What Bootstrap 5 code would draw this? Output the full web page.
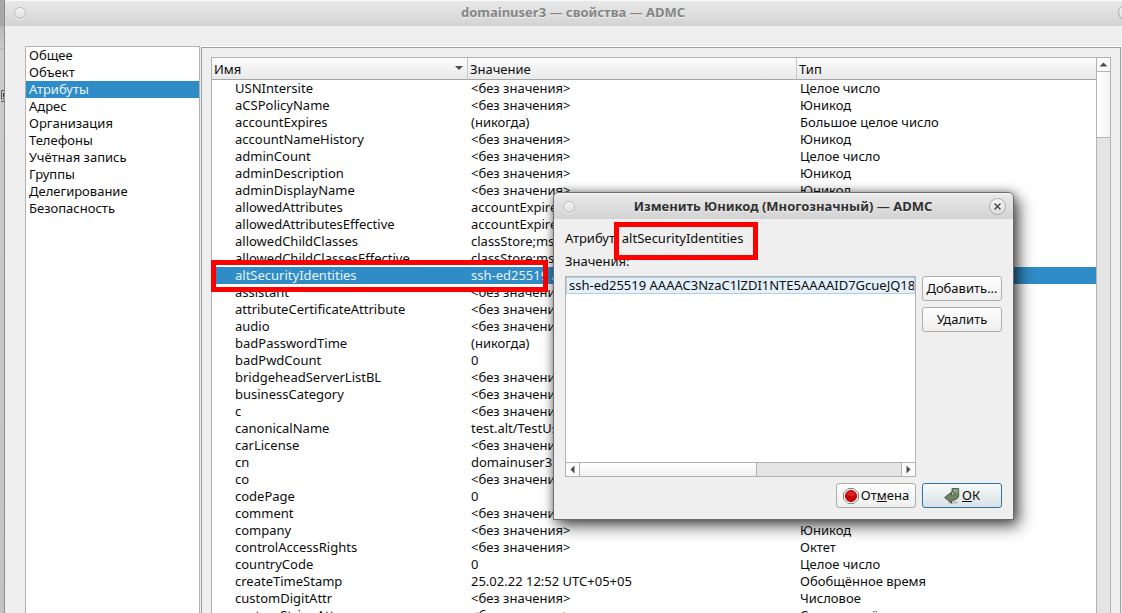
<!DOCTYPE html>
<html lang="ru">
<head>
<meta charset="utf-8">
<meta name="viewport" content="width=device-width, initial-scale=1">
<title>domainuser3 — свойства — ADMC</title>
<link href="https://cdn.jsdelivr.net/npm/bootstrap@5.3.0/dist/css/bootstrap.min.css" rel="stylesheet">
<style>
  :root { --line: #b2b2b2; --sel: #308cc6; --face: #efefef; }
  body { font: 13px/17px "Noto Sans", sans-serif; color: #0c0c0c; background: #cfcfcf; }
  .backdrop-edge { width: 5px; background: linear-gradient(#a8a8a8 0 26px, #b9b9b9 27px, #cacaca 48px, #b0b0b0 49px, #cbcbcb 50px, #c4c4c4 100%); border-right: 1px solid #8c8c8c; }
  .backdrop-edge svg { margin-top: 89px; }
  .main-window { margin-right: -21px; background: var(--face); border-top-left-radius: 6px; min-width: 0; }
  .title-bar { height: 26px; padding: 0 8px 2px 7px; background: linear-gradient(#e9e9e9, #d3d3d3); border-top: 1px solid #f8f8f8; font-weight: 700; color: #858585; text-shadow: 0 1px 0 #f2f2f2; }
  .editor .title-bar { padding: 0 7px; }
  .round-btn { width: 17px; height: 17px; padding: 0; border: 1px solid #a9a9a9; border-radius: 50%; background: linear-gradient(#f6f6f6, #dedede); line-height: 0; }
  .round-dot { width: 12px; height: 12px; margin: 0 2px; border-color: #bcbcbc; box-shadow: 0 1px 0 #f4f4f4; }
  .main-body { padding: 20px 22px 0 20px; min-height: 0; gap: 1px; }
  .pages { width: 175px; border: 1px solid var(--line); border-bottom: 0; background: #fff; }
  .pages .nav-link { padding: 0 3px; color: #0c0c0c; }
  .pages .nav-link.active { background: var(--sel); color: #e8f3fa; }
  .page-frame { min-width: 0; margin-top: 1px; border: 1px solid #9f9f9f; border-bottom: 0; box-shadow: 0 -1px 0 #fff; padding: 9px 9px 0 9px; }
  .tree-box { border: 1px solid var(--line); border-bottom: 0; background: #fff; min-height: 0; }
  .tree-view { min-width: 0; overflow: hidden; }
  .attrs { width: 100%; table-layout: fixed; border-collapse: separate; border-spacing: 0; white-space: nowrap; }
  .attrs th { height: 22px; padding: 2px 2px 0; font-weight: 400; background: linear-gradient(#fcfcfc, #e9e9e9); border-bottom: 1px solid #a5a5a5; border-right: 1px solid #c6c6c6; }
  .attrs th:last-child { border-right: 0; }
  .attrs td { height: 17px; padding: 0 3px; overflow: hidden; }
  .attrs td:first-child { padding-left: 23px; }
  .attrs .picked td { background: var(--sel); color: #e8f3fa; }
  .mark-box { position: absolute; border: 5px solid #f00; pointer-events: none; }
  .mark-row { left: -1px; top: 202px; width: 337px; height: 32px; }
  .mark-name { left: 49px; top: -8px; width: 144px; height: 38px; }
  .bar-v { width: 14px; background: #e4e4e4; border-left: 1px solid var(--line); }
  .bar-h { height: 14px; background: #e4e4e4; border-top: 1px solid var(--line); }
  .arrow-btn { width: 13px; height: 13px; padding: 0; border: 0; background: #fbfbfb; line-height: 0; display: grid; place-items: center; }
  .thumb-v { height: 67px; background: linear-gradient(90deg, #fff, #f3f3f3); border: solid var(--line); border-width: 1px 0; }
  .thumb-h { width: 178px; background: linear-gradient(#fff, #f0f0f0); border: solid var(--line); border-width: 0 1px; }
  .arrow-end { width: 14px; border-left: 1px solid var(--line); }
  .editor { position: absolute; left: 553px; top: 192px; width: 461px; background: var(--face); border: 1px solid #6b6b6b; border-radius: 6px 6px 0 0; box-shadow: 5px 6px 16px rgba(0,0,0,.65), 0 0 10px rgba(0,0,0,.35); }
  .editor .title-bar { color: #303030; border-radius: 5px 5px 0 0; }
  .editor-body { padding: 11px; gap: 6px; }
  .gap-tight { gap: 6px; }
  .values { min-width: 0; height: 201px; border: 1px solid var(--line); background: #fff; }
  .value-item { height: 17px; margin: 0; padding: 0 2px; background: #e4f1fa; border: 1px solid #b4cfdf; white-space: nowrap; overflow: hidden; line-height: 15px; }
  .tool-btn { width: 80px; height: 25px; padding: 0; font-size: 13px; line-height: 17px; color: #0c0c0c; border: 1px solid #adadad; border-radius: 3px; background: linear-gradient(#fefefe, #efefef); }
  .icon-btn { display: flex; align-items: center; justify-content: center; gap: 2px; }
  .ok-btn { border-color: #2a76a5; background: linear-gradient(#f8fafb, #dae1e6); }
</style>
</head>
<body class="vh-100 overflow-hidden position-relative">
<div class="d-flex h-100">
  <div class="backdrop-edge flex-shrink-0" aria-hidden="true">
    <svg class="d-block" width="4" height="14" viewBox="0 0 4 14"><path d="M4 1.500H1.500v8.500H4M1 12.500h3" fill="none" stroke="#555"/><path d="M3 4h1v4H3z" fill="#333"/></svg>
  </div>
  <main class="main-window flex-grow-1 d-flex flex-column">
    <header class="title-bar d-flex align-items-center justify-content-between flex-shrink-0">
      <button class="round-btn round-dot" type="button" aria-label="Меню окна"></button>
      <span>domainuser3 — свойства — ADMC</span>
      <button class="round-btn" type="button" aria-label="Закрыть"></button>
    </header>
    <div class="main-body d-flex flex-grow-1">
      <nav class="pages nav flex-column flex-nowrap flex-shrink-0">
        <a class="nav-link" href="#">Общее</a>
        <a class="nav-link" href="#">Объект</a>
        <a class="nav-link active" href="#">Атрибуты</a>
        <a class="nav-link" href="#">Адрес</a>
        <a class="nav-link" href="#">Организация</a>
        <a class="nav-link" href="#">Телефоны</a>
        <a class="nav-link" href="#">Учётная запись</a>
        <a class="nav-link" href="#">Группы</a>
        <a class="nav-link" href="#">Делегирование</a>
        <a class="nav-link" href="#">Безопасность</a>
      </nav>
      <section class="page-frame flex-grow-1 d-flex flex-column">
        <div class="tree-box d-flex flex-grow-1 position-relative">
          <div class="tree-view flex-grow-1">
            <table class="attrs">
              <colgroup><col style="width:256px"><col style="width:329px"><col></colgroup>
              <thead><tr>
                <th scope="col"><span class="d-flex justify-content-between align-items-center">Имя <svg width="12" height="10" viewBox="0 0 12 10"><path d="M2 1h8L6 5z" fill="#4c4c4c"/></svg></span></th>
                <th scope="col">Значение</th><th scope="col">Тип</th>
              </tr></thead>
              <tbody>
                <tr><td>USNIntersite</td><td>&lt;без значения&gt;</td><td>Целое число</td></tr>
                <tr><td>aCSPolicyName</td><td>&lt;без значения&gt;</td><td>Юникод</td></tr>
                <tr><td>accountExpires</td><td>(никогда)</td><td>Большое целое число</td></tr>
                <tr><td>accountNameHistory</td><td>&lt;без значения&gt;</td><td>Юникод</td></tr>
                <tr><td>adminCount</td><td>&lt;без значения&gt;</td><td>Целое число</td></tr>
                <tr><td>adminDescription</td><td>&lt;без значения&gt;</td><td>Юникод</td></tr>
                <tr><td>adminDisplayName</td><td>&lt;без значения&gt;</td><td>Юникод</td></tr>
                <tr><td>allowedAttributes</td><td>accountExpires</td><td></td></tr>
                <tr><td>allowedAttributesEffective</td><td>accountExpires</td><td></td></tr>
                <tr><td>allowedChildClasses</td><td>classStore;ms-</td><td></td></tr>
                <tr><td>allowedChildClassesEffective</td><td>classStore;ms-</td><td></td></tr>
                <tr class="picked"><td>altSecurityIdentities</td><td>ssh-ed25519 A</td><td></td></tr>
                <tr><td>assistant</td><td>&lt;без значения&gt;</td><td></td></tr>
                <tr><td>attributeCertificateAttribute</td><td>&lt;без значения&gt;</td><td></td></tr>
                <tr><td>audio</td><td>&lt;без значения&gt;</td><td></td></tr>
                <tr><td>badPasswordTime</td><td>(никогда)</td><td></td></tr>
                <tr><td>badPwdCount</td><td>0</td><td></td></tr>
                <tr><td>bridgeheadServerListBL</td><td>&lt;без значения&gt;</td><td></td></tr>
                <tr><td>businessCategory</td><td>&lt;без значения&gt;</td><td></td></tr>
                <tr><td>c</td><td>&lt;без значения&gt;</td><td></td></tr>
                <tr><td>canonicalName</td><td>test.alt/TestUsers</td><td></td></tr>
                <tr><td>carLicense</td><td>&lt;без значения&gt;</td><td></td></tr>
                <tr><td>cn</td><td>domainuser3</td><td></td></tr>
                <tr><td>co</td><td>&lt;без значения&gt;</td><td></td></tr>
                <tr><td>codePage</td><td>0</td><td></td></tr>
                <tr><td>comment</td><td>&lt;без значения&gt;</td><td>Юникод</td></tr>
                <tr><td>company</td><td>&lt;без значения&gt;</td><td>Юникод</td></tr>
                <tr><td>controlAccessRights</td><td>&lt;без значения&gt;</td><td>Октет</td></tr>
                <tr><td>countryCode</td><td>0</td><td>Целое число</td></tr>
                <tr><td>createTimeStamp</td><td>25.02.22 12:52 UTC+05+05</td><td>Обобщённое время</td></tr>
                <tr><td>customDigitAttr</td><td>&lt;без значения&gt;</td><td>Числовое</td></tr>
                <tr><td>customStringAttr</td><td>&lt;без значения&gt;</td><td>Строка с учётом</td></tr>
              </tbody>
            </table>
          </div>
          <div class="bar-v flex-shrink-0">
            <button class="arrow-btn" type="button" aria-label="Прокрутить вверх"><svg width="9" height="5" viewBox="0 0 9 5"><path d="M0.500 4.500h8L4.500 0.500z" fill="#4c4c4c"/></svg></button>
            <div class="thumb-v"></div>
          </div>
          <div class="mark-box mark-row"></div>
        </div>
      </section>
    </div>
  </main>
</div>

<div class="editor" role="dialog" aria-labelledby="editor-title">
  <header class="title-bar d-flex align-items-center justify-content-between">
    <button class="round-btn round-dot" type="button" aria-label="Меню окна"></button>
    <span id="editor-title">Изменить Юникод (Многозначный) — ADMC</span>
    <button class="round-btn" type="button" aria-label="Закрыть"><svg width="15" height="15" viewBox="0 0 15 15"><path d="M4.500 4.500l6 6M10.500 4.500l-6 6" stroke="#444" stroke-width="1.400"/></svg></button>
  </header>
  <div class="editor-body d-flex flex-column">
    <div class="position-relative">Атрибут: altSecurityIdentities<span class="mark-box mark-name"></span></div>
    <div id="values-label">Значения:</div>
    <div class="d-flex gap-tight">
      <div class="values flex-grow-1 d-flex flex-column">
        <ul class="list-unstyled flex-grow-1 m-0" aria-labelledby="values-label">
          <li class="value-item">ssh-ed25519 AAAAC3NzaC1lZDI1NTE5AAAAID7GcueJQ18pIP</li>
        </ul>
        <div class="bar-h d-flex">
          <button class="arrow-btn" type="button" aria-label="Прокрутить влево"><svg width="5" height="9" viewBox="0 0 5 9"><path d="M4.500 0.500v8L0.500 4.500z" fill="#4c4c4c"/></svg></button>
          <div class="thumb-h"></div>
          <button class="arrow-btn arrow-end ms-auto" type="button" aria-label="Прокрутить вправо"><svg width="5" height="9" viewBox="0 0 5 9"><path d="M0.500 0.500v8L4.500 4.500z" fill="#4c4c4c"/></svg></button>
        </div>
      </div>
      <div class="d-flex flex-column gap-tight">
        <button class="tool-btn" type="button">Добавить...</button>
        <button class="tool-btn" type="button">Удалить</button>
      </div>
    </div>
    <div class="d-flex justify-content-end gap-tight">
      <button class="tool-btn icon-btn" type="button">
        <svg width="16" height="16" viewBox="0 0 16 16"><path d="M5 .5h6L15.500 5v6L11 15.500H5L.5 11V5z" fill="#f0f0ee" stroke="#888a85"/><circle cx="8" cy="8" r="5.500" fill="#cc0000" stroke="#b00000"/><path d="M3.500 7a4.600 4.600 0 0 1 9 0q-4 2-9 0z" fill="#dd2222"/></svg>
        <span>От<u>м</u>ена</span>
      </button>
      <button class="tool-btn icon-btn ok-btn" type="button">
        <svg width="16" height="16" viewBox="0 0 16 16"><ellipse cx="9" cy="14.300" rx="5" ry="1.500" fill="#bcc4c6"/><path d="M8 .5h6.700v7q0 4.200-7.200 5v2.700L.5 9.500l7-5.500v3H9q1-.5.500-2.500L8 4z" fill="#6c8260" stroke="#4a5842" stroke-width=".9"/><path d="M8.700 1.200h5.300v3.500h-3.700z" fill="#8fa382"/></svg>
        <span><u>О</u>К</span>
      </button>
    </div>
  </div>
</div>
<script src="https://cdn.jsdelivr.net/npm/bootstrap@5.3.0/dist/js/bootstrap.bundle.min.js"></script>
</body>
</html>
